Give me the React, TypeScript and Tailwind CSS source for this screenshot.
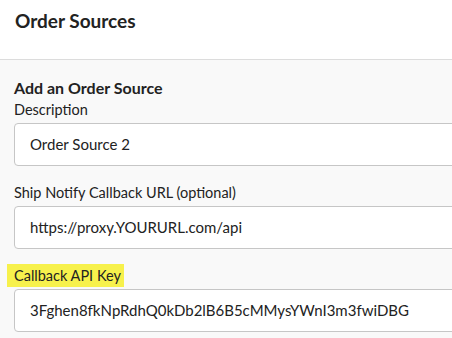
const FONT = '"Lato", "Noto Sans", sans-serif';

const FIELDS = [
  { label: 'Description', value: 'Order Source 2' },
  { label: 'Ship Notify Callback URL (optional)', value: 'https://proxy.YOURURL.com/api' },
  { label: 'Callback API Key', value: '3Fghen8fkNpRdhQ0kDb2lB6B5cMMysYWnI3m3fwiDBG', highlight: true },
];

const App = () => {
  return (
    <div className="w-[452px] h-[338px] overflow-hidden bg-[#f9f9f9] text-[#222]" style={{ fontFamily: FONT }}>
      {/* header */}
      <div className="h-[60px] bg-white border-b border-[#dcdcdc] pl-[15px] pt-[9px]">
        <h1 className="text-[19px] leading-[24px] font-bold">Order Sources</h1>
      </div>

      <div className="pl-[14px] pt-[18px]">
        <h2 className="text-[16px] leading-[20px] font-bold mb-[1px]">Add an Order Source</h2>

        <div className="flex flex-col gap-[16px]">
          {FIELDS.map((f) => (
            <div key={f.label} className="flex flex-col">
              <div className="h-[22px] flex items-end">
                <span
                  className={`text-[14.5px] leading-[22px] pt-[1px] ${f.highlight ? 'bg-[#f7f14c] -ml-[7px] pl-[7px] pr-[3px]' : ''}`}
                >
                  {f.label}
                </span>
              </div>
              <div className="mt-[2px] h-[43px] w-[460px] bg-white border border-[#c6c6c6] rounded-l-[4px] flex items-center pl-[15px] text-[15px]">
                {f.value}
              </div>
            </div>
          ))}
        </div>
      </div>
    </div>
  );
};

export default App;
